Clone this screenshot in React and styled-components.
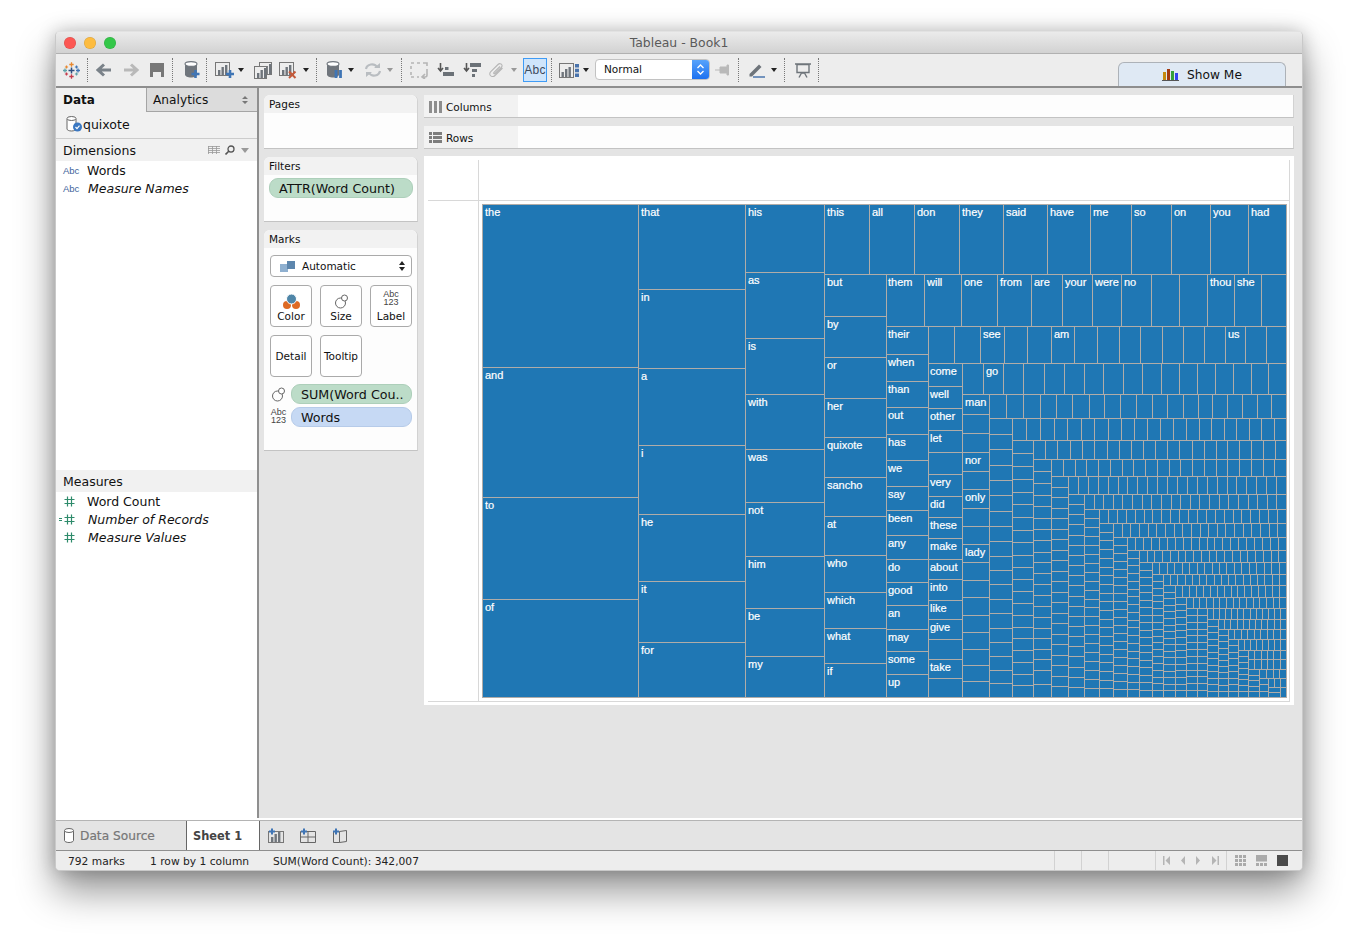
import React from 'react';
import styled, { createGlobalStyle } from 'styled-components';

const FONT = '"DejaVu Sans", sans-serif';

const GlobalStyle = createGlobalStyle`
  html, body {
    margin: 0;
    background: #fff;
    font-family: ${FONT};
    color: #111;
  }
`;

const Page = styled.div`
  width: 1358px;
  height: 951px;
  padding: 31px 0 0 55px;
  box-sizing: border-box;
  overflow: hidden;
`;

const Window = styled.div`
  width: 1248px;
  height: 840px;
  box-sizing: border-box;
  border: 1px solid #c9c9c9;
  border-top-color: #e2e2e2;
  border-radius: 5px;
  overflow: hidden;
  display: flex;
  flex-direction: column;
  box-shadow: 0 20px 38px rgba(0, 0, 0, 0.42), 0 0 18px rgba(0, 0, 0, 0.22);
  background: #ededed;
`;

const TitleBar = styled.div`
  height: 22px;
  box-sizing: border-box;
  flex: none;
  background: linear-gradient(#ebebeb, #d2d2d2);
  border-bottom: 1px solid #b1b1b1;
  display: flex;
  align-items: center;
  justify-content: center;
  position: relative;
  font-size: 12.4px;
  color: #5a5a5a;
`;

const Light = styled.span`
  position: absolute;
  top: 5px;
  left: ${(p) => p.$left}px;
  width: 12px;
  height: 12px;
  border-radius: 50%;
  background: ${(p) => p.$color};
  box-shadow: inset 0 0 0 0.5px rgba(0, 0, 0, 0.15);
`;

const Toolbar = styled.div`
  height: 34px;
  box-sizing: border-box;
  flex: none;
  background: #ededed;
  border-bottom: 2px solid #8e8e8e;
  display: flex;
  align-items: center;
  padding-right: 16px;
`;

const Ico = styled.svg`
  display: block;
  flex: none;
  margin-left: ${(p) => p.$gap || 0}px;
`;

const Sep = styled.span`
  flex: none;
  width: 0;
  height: 24px;
  margin-left: ${(p) => p.$gap}px;
  margin-right: 1px;
  border-left: 1px dotted #777;
`;

const Caret = styled.span`
  flex: none;
  width: 0;
  height: 0;
  margin-left: ${(p) => p.$gap}px;
  border-left: ${(p) => (p.$wide ? 4 : 3)}px solid transparent;
  border-right: ${(p) => (p.$wide ? 4 : 3)}px solid transparent;
  border-top: ${(p) => (p.$wide ? 5 : 4)}px solid ${(p) => (p.$light ? '#999' : '#222')};
`;

const AbcToggle = styled.div`
  flex: none;
  width: 24px;
  height: 24px;
  box-sizing: border-box;
  margin-left: ${(p) => p.$gap}px;
  background: #cfe5fb;
  border: 1px solid #3f9bf5;
  font: 12px 'Liberation Sans', sans-serif;
  color: #3d4a5c;
  display: flex;
  align-items: center;
  justify-content: center;
  letter-spacing: 0.2px;
`;

const SelectBox = styled.div`
  flex: none;
  width: 115px;
  height: 21px;
  box-sizing: border-box;
  margin: -1px 0 0 ${(p) => p.$gap}px;
  background: #fff;
  border: 1px solid #c2c2c2;
  border-radius: 4px;
  font-size: 10.5px;
  display: flex;
  align-items: center;
  justify-content: space-between;
  padding: 0 0 1px 8px;
  overflow: hidden;
`;

const Stepper = styled.span`
  width: 17px;
  height: 21px;
  margin-bottom: -1px;
  background: linear-gradient(#5aa5fb, #1a6ff0);
  display: flex;
  align-items: center;
  justify-content: center;
`;

const ShowMe = styled.div`
  margin-left: auto;
  align-self: flex-end;
  width: 168px;
  height: 24px;
  box-sizing: border-box;
  background: #dfe9f4;
  border: 1px solid #adb2b8;
  border-bottom: none;
  border-radius: 6px 6px 0 0;
  display: flex;
  align-items: center;
  justify-content: center;
  gap: 8px;
  font-size: 12.2px;
`;

const Main = styled.div`
  height: 732px;
  flex: none;
  display: flex;
  background: #e4e4e4;
  border-bottom: 2px solid #fff;
  box-sizing: border-box;
`;

const DataPane = styled.div`
  width: 203px;
  box-sizing: border-box;
  flex: none;
  background: #fff;
  border-right: 2px solid #8f8f8f;
  display: flex;
  flex-direction: column;
`;

const PaneTabs = styled.div`
  display: flex;
  height: 24px;
  flex: none;
`;

const PaneTab = styled.div`
  display: flex;
  align-items: center;
  padding-left: ${(p) => (p.$active ? 7 : 6)}px;
  padding-bottom: ${(p) => (p.$active ? 1 : 0)}px;
  box-sizing: border-box;
  position: relative;
  width: ${(p) => (p.$active ? 90 : 111)}px;
  font-weight: ${(p) => (p.$active ? 700 : 400)};
  font-size: ${(p) => (p.$active ? 12 : 12.2)}px;
  background: ${(p) => (p.$active ? '#f1f1f1' : '#dcdcdc')};
  border-left: ${(p) => (p.$active ? 'none' : '1px solid #a5a5a5')};
  border-bottom: ${(p) => (p.$active ? 'none' : '1px solid #a5a5a5')};
`;

const SortArrows = styled.svg`
  position: absolute;
  right: 9px;
  top: 8px;
`;

const SourceRow = styled.div`
  height: 27px;
  flex: none;
  box-sizing: border-box;
  padding: 0 0 2px 10px;
  display: flex;
  align-items: center;
  background: #f1f1f1;
  border-bottom: 1px solid #ccc;
  font-size: 12.5px;
`;

const SectionHead = styled.div`
  height: 22px;
  flex: none;
  box-sizing: border-box;
  padding: 0 8px 0 7px;
  display: flex;
  align-items: center;
  background: #f1f1f1;
  font-size: 12.5px;
  gap: 5px;
`;

const HeadTitle = styled.span`
  flex: 1;
`;

const FieldList = styled.div`
  height: ${(p) => p.$h}px;
  flex: none;
`;

const FieldRow = styled.div`
  height: 18px;
  display: flex;
  align-items: center;
  font-size: 12.5px;
  font-style: ${(p) => (p.$calc ? 'italic' : 'normal')};
  position: relative;
  padding-left: ${(p) => (p.$calc ? 32 : 31)}px;
`;

const FieldIcon = styled.span`
  position: absolute;
  left: 7px;
  top: 0;
  height: 18px;
  display: flex;
  align-items: center;
  font: normal 9.5px 'Liberation Sans', sans-serif;
  color: #41639b;
`;

const HashSvg = styled.svg`
  position: absolute;
  left: ${(p) => p.$left}px;
  top: 4px;
`;

const Workspace = styled.div`
  flex: 1;
  min-width: 0;
  display: flex;
  align-items: flex-start;
  gap: 6px;
  padding: 7px 0 0 5px;
`;

const CardsCol = styled.div`
  width: 154px;
  flex: none;
  display: flex;
  flex-direction: column;
  gap: 8px;
`;

const Card = styled.div`
  height: ${(p) => p.$h}px;
  box-sizing: border-box;
  background: #fdfdfd;
  border-radius: 6px 6px 0 0;
  border-bottom: 1px solid #c3c3c3;
  border-right: 1px solid #d2d2d2;
  display: flex;
  flex-direction: column;
`;

const CardHead = styled.div`
  height: 18px;
  flex: none;
  padding-left: 5px;
  display: flex;
  align-items: center;
  font-size: 10.5px;
  background: #f2f2f2;
  border-radius: 6px 6px 0 0;
`;

const Pill = styled.div`
  height: 20px;
  box-sizing: border-box;
  border-radius: 9px;
  padding-left: 9px;
  display: flex;
  align-items: center;
  font-size: 12.7px;
  white-space: nowrap;
  flex: ${(p) => (p.$grow ? 1 : 'none')};
  background: ${(p) => (p.$blue ? '#c6d9f4' : '#bcdcc8')};
  border: 1px solid ${(p) => (p.$blue ? '#b6cbe9' : '#adcfba')};
`;

const FilterBody = styled.div`
  padding: 3px 4px 0 5px;
`;

const MarksBody = styled.div`
  padding: 7px 5px 0 6px;
  display: flex;
  flex-direction: column;
`;

const MarkType = styled.div`
  height: 22px;
  width: 142px;
  box-sizing: border-box;
  border: 1px solid #aaa;
  border-radius: 4px;
  background: #fff;
  display: flex;
  align-items: center;
  padding: 0 6px 0 9px;
  font-size: 10.5px;
  gap: 7px;
`;

const MarkGrid = styled.div`
  display: grid;
  grid-template-columns: repeat(3, 42px);
  gap: 8px;
  margin-top: 8px;
`;

const MarkButton = styled.div`
  height: 42px;
  box-sizing: border-box;
  border: 1px solid #aaa;
  border-radius: 4px;
  background: #fff;
  display: flex;
  flex-direction: column;
  align-items: center;
  justify-content: flex-end;
  padding-bottom: ${(p) => (p.$plain ? 14 : 4)}px;
  font-size: 10.5px;
  gap: 1px;
  white-space: nowrap;
`;

const StackedAbc = styled.span`
  font: 9px/8px 'Liberation Sans', sans-serif;
  text-align: center;
  color: #444;
  margin-bottom: 3px;
`;

const Encodings = styled.div`
  margin-top: 7px;
  width: 142px;
  display: flex;
  flex-direction: column;
  gap: 3px;
`;

const EncodingRow = styled.div`
  display: flex;
  align-items: center;
  gap: 4px;
`;

const EncodingIcon = styled.div`
  width: 17px;
  flex: none;
  display: flex;
  justify-content: center;
`;

const ViewCol = styled.div`
  width: 870px;
  flex: none;
  display: flex;
  flex-direction: column;
`;

const Shelf = styled.div`
  height: 23px;
  box-sizing: border-box;
  margin-bottom: 8px;
  background: #fdfdfd;
  border-bottom: 1px solid #c3c3c3;
  border-right: 1px solid #d2d2d2;
  display: flex;
`;

const ShelfHead = styled.div`
  width: 94px;
  flex: none;
  background: #f2f2f2;
  display: flex;
  align-items: center;
  gap: 4px;
  padding: 1px 0 0 5px;
  box-sizing: border-box;
  font-size: 10.5px;
`;

const View = styled.div`
  height: 549px;
  margin-top: -1px;
  box-sizing: border-box;
  background: #fff;
  padding: 4px 4px 3px 4px;
`;

const ViewGrid = styled.div`
  height: 100%;
  box-sizing: border-box;
  display: grid;
  grid-template-columns: 50px 1fr;
  grid-template-rows: 41px 1fr;
  border-right: 1px solid #d8d8d8;
  border-bottom: 1px solid #d8d8d8;
`;

const Pane = styled.div`
  min-width: 0;
  min-height: 0;
  border-bottom: ${(p) => (p.$under ? '1px solid #d8d8d8' : 'none')};
  border-left: ${(p) => (p.$side ? '1px solid #d8d8d8' : 'none')};
  padding: ${(p) => (p.$chart ? '3px 0 0 3px' : 0)};
`;

const ChartSvg = styled.svg`
  display: block;
`;

const Cell = styled.rect`
  fill: #1f77b4;
  stroke: #b0aca8;
  stroke-width: 1;
`;

const CellLabel = styled.text`
  fill: #fff;
  stroke: #fff;
  stroke-width: 0.2;
  font-family: 'Liberation Sans', sans-serif;
  font-size: 11px;
`;

const TabBar = styled.div`
  height: 31px;
  box-sizing: border-box;
  flex: none;
  background: #e4e4e4;
  border-top: 1px solid #b4b4b4;
  border-bottom: 1px solid #8f8f8f;
  display: flex;
  align-items: stretch;
`;

const DataSourceTab = styled.div`
  width: 130px;
  flex: none;
  box-sizing: border-box;
  padding-left: 8px;
  display: flex;
  align-items: center;
  gap: 6px;
  font-size: 12.2px;
  color: #777;
  -webkit-text-stroke: 0.2px #777;
`;

const SheetTab = styled.div`
  width: 74px;
  flex: none;
  box-sizing: border-box;
  padding-left: 6px;
  display: flex;
  align-items: center;
  font-size: 11.4px;
  font-weight: 700;
  color: #444;
  background: #fff;
  border-left: 1px solid #666;
  border-right: 1px solid #666;
`;

const TabTools = styled.div`
  display: flex;
  align-items: center;
  padding-left: 8px;
  gap: 15px;
`;

const StatusBar = styled.div`
  height: 19px;
  flex: none;
  background: #ededed;
  display: flex;
  align-items: stretch;
  font-size: 10.7px;
  color: #222;
`;

const StatusText = styled.div`
  width: ${(p) => p.$w}px;
  padding: 1px 0 0 ${(p) => p.$pad || 0}px;
  box-sizing: border-box;
  flex: none;
  display: flex;
  align-items: center;
  white-space: nowrap;
`;

const StatusSpacer = styled.div`
  flex: 1;
`;

const StatusCell = styled.div`
  width: ${(p) => p.$w}px;
  flex: none;
  box-sizing: border-box;
  border-left: 1px solid #d2d2d2;
  display: flex;
  align-items: center;
  gap: ${(p) => p.$gap || 0}px;
  padding-left: ${(p) => p.$pad || 0}px;
`;

/* treemap data, absolute page coordinates */
const CHART_X = 482;
const CHART_Y = 204;
const CHART_R = 1286;
const CHART_B = 697;

const cells = [];
const push = (x0, y0, x1, y1, label) => cells.push({ x0, y0, x1, y1, label });

// a column of stacked cells: stops are [top, label]
const col = (x0, x1, stops, end = CHART_B) =>
  stops.forEach(([y, label], i) => push(x0, y, x1, i + 1 < stops.length ? stops[i + 1][0] : end, label));

// a row of side by side cells: stops are [left, label]
const row = (y0, y1, stops, end = CHART_R) =>
  stops.forEach(([x, label], i) => push(x, y0, i + 1 < stops.length ? stops[i + 1][0] : end, y1, label));

const split = (a, b, n) => Array.from({ length: n }, (_, i) => [Math.round(a + ((b - a) * i) / n)]);
const tops = (list) => list.map((v) => [v]);

col(482, 638, [[204, 'the'], [367, 'and'], [497, 'to'], [599, 'of']]);
col(638, 745, [[204, 'that'], [289, 'in'], [368, 'a'], [445, 'i'], [514, 'he'], [581, 'it'], [642, 'for']]);
col(745, 824, [[204, 'his'], [272, 'as'], [338, 'is'], [394, 'with'], [449, 'was'], [502, 'not'], [556, 'him'], [608, 'be'], [656, 'my']]);
row(204, 274, [[824, 'this'], [869, 'all'], [914, 'don'], [959, 'they'], [1003, 'said'], [1047, 'have'], [1090, 'me'], [1131, 'so'], [1171, 'on'], [1210, 'you'], [1248, 'had']]);
col(824, 886, [[274, 'but'], [316, 'by'], [357, 'or'], [398, 'her'], [437, 'quixote'], [477, 'sancho'], [516, 'at'], [555, 'who'], [592, 'which'], [628, 'what'], [663, 'if']]);
row(274, 326, [[886, 'them'], [924, 'will'], [961, 'one'], [997, 'from'], [1031, 'are'], [1062, 'your'], [1092, 'were'], [1121, 'no'], [1151], [1179], [1207, 'thou'], [1234, 'she'], [1261]]);
col(886, 928, [[326, 'their'], [354, 'when'], [381, 'than'], [407, 'out'], [434, 'has'], [460, 'we'], [486, 'say'], [510, 'been'], [535, 'any'], [559, 'do'], [582, 'good'], [605, 'an'], [629, 'may'], [651, 'some'], [674, 'up']]);
row(326, 363, [[928], [954], [980, 'see'], [1004], [1027], [1051, 'am'], [1074], [1097], [1119], [1140], [1162], [1183], [1204], [1225, 'us'], [1245], [1266]]);
col(928, 962, [[363, 'come'], [386, 'well'], [408, 'other'], [430, 'let'], [452], [474, 'very'], [496, 'did'], [517, 'these'], [538, 'make'], [559, 'about'], [579, 'into'], [600, 'like'], [619, 'give'], [639], [659, 'take'], [678]]);
row(363, 394, [[962], [983, 'go'], [1003], [1023], [1044], [1064], [1084], [1103], [1123], [1142], [1161], [1179], [1197], [1215], [1233], [1251], [1268]]);
col(962, 989, [[394, 'man'], [414], [433], [452, 'nor'], [471], [489, 'only'], [508], [526], [544, 'lady'], [562], [580], [597], [615], [632], [649], [665], [681]]);
row(394, 418, tops([989, 1006, 1023, 1040, 1056, 1072, 1089, 1104, 1120, 1136, 1152, 1167, 1183, 1198, 1212, 1227, 1242, 1257, 1271]));
col(989, 1012, tops([418, 434, 449, 465, 480, 495, 511, 526, 541, 556, 570, 584, 599, 613, 628, 642, 656, 670, 683]));
row(418, 440, tops([1012, 1026, 1040, 1054, 1067, 1081, 1094, 1108, 1121, 1134, 1147, 1160, 1173, 1186, 1199, 1211, 1224, 1236, 1249, 1261, 1274]));
col(1012, 1033, tops([440, 453, 466, 479, 492, 504, 517, 530, 542, 555, 567, 579, 591, 603, 615, 627, 638, 650, 662, 674, 685]));
row(440, 459, tops([1033, 1045, 1057, 1070, 1082, 1094, 1107, 1119, 1131, 1143, 1155, 1167, 1179, 1192, 1204, 1216, 1227, 1239, 1251, 1263, 1275]));
col(1033, 1051, tops([459, 471, 483, 495, 506, 518, 529, 540, 552, 562, 573, 584, 595, 606, 617, 628, 638, 649, 659, 670, 684]));

// the staircase toward the lower right: a row, then a column, each smaller
row(459, 476, split(1051, 1286, 20));
col(1051, 1068, split(476, 697, 21));
row(476, 494, split(1068, 1286, 22));
col(1068, 1084, split(494, 697, 20));
row(494, 509, split(1084, 1286, 21));
col(1084, 1099, split(509, 697, 21));
row(509, 523, split(1099, 1286, 21));
col(1099, 1113, split(523, 697, 20));
row(523, 537, split(1113, 1286, 20));
col(1113, 1127, split(537, 697, 20));
row(537, 550, split(1127, 1286, 20));
col(1127, 1139, split(550, 697, 19));
row(550, 562, split(1139, 1286, 19));
col(1139, 1152, split(562, 697, 18));
row(562, 574, split(1152, 1286, 18));
col(1152, 1163, split(574, 697, 18));
row(574, 585, split(1163, 1286, 17));
col(1163, 1175, split(585, 697, 17));
row(585, 597, split(1175, 1286, 16));
col(1175, 1186, split(597, 697, 15));
row(597, 608, split(1186, 1286, 15));
col(1186, 1197, split(608, 697, 13));
col(1197, 1207, split(608, 697, 13));
row(608, 619, split(1207, 1286, 13));
col(1207, 1218, split(619, 697, 12));
row(619, 629, split(1218, 1286, 11));
col(1218, 1228, split(629, 697, 11));
row(629, 639, split(1228, 1286, 9));
col(1228, 1238, split(639, 697, 9));
row(639, 650, split(1238, 1286, 8));
col(1238, 1248, split(650, 697, 8));
row(650, 659, split(1248, 1286, 6));
row(659, 669, split(1248, 1286, 6));
col(1248, 1259, split(669, 697, 5));
row(669, 678, split(1259, 1286, 4));
col(1259, 1268, split(678, 697, 3));
row(678, 687, split(1268, 1286, 3));
col(1268, 1280, [[687], [692]]);
push(1280, 687, 1286, 697);

// the two narrow columns sit their labels a pixel closer to the edge
const labelX = (c) => c.x0 + (c.x0 === 886 || c.x0 === 928 ? 2 : 3);

const Treemap = () => (
  <ChartSvg width={806} height={495} viewBox={`${CHART_X} ${CHART_Y} 806 495`}>
    {cells.map((c, i) => (
      <Cell key={i} x={c.x0 + 0.5} y={c.y0 + 0.5} width={c.x1 - c.x0} height={c.y1 - c.y0} />
    ))}
    {cells
      .filter((c) => c.label)
      .map((c) => (
        <CellLabel key={c.label} x={labelX(c)} y={c.y0 + 12}>
          {c.label}
        </CellLabel>
      ))}
  </ChartSvg>
);

const plus = (x, y, r, color, w = 1) => (
  <path key={`${x}-${y}`} d={`M${x - r} ${y}H${x + r}M${x} ${y - r}V${y + r}`} stroke={color} strokeWidth={w} fill="none" />
);

const Db = ({ color = '#6f757c' }) => (
  <>
    <path d="M1 3.500v10c0 1.700 2.800 3 6 3s6-1.300 6-3v-10z" fill={color} />
    <ellipse cx="7" cy="3" rx="6" ry="2.400" fill="#fff" stroke={color} strokeWidth="1.100" />
  </>
);

const MiniBars = ({ x = 0, y = 0, color = '#6f757c' }) => (
  <g transform={`translate(${x} ${y})`} fill={color}>
    <rect x="3" y="8" width="2.400" height="5" />
    <rect x="6.500" y="5" width="2.400" height="8" />
    <rect x="10" y="3" width="2.400" height="10" />
  </g>
);

const BluePlus = ({ x, y, r = 4 }) => plus(x, y, r, '#3f75b5', 2.6);

const Hash = ({ left = 8, equals }) => (
  <HashSvg $left={left} width={equals ? 16 : 12} height="11" viewBox={equals ? '-5 0 16 11' : '0 0 12 11'}>
    <path d="M3.500 0.500v10M7.500 0.500v10M0.500 3.500h10M0.500 7.500h10" stroke="#2e8b6b" strokeWidth="1.200" fill="none" />
    {equals && <path d="M-5 4.500h3M-5 6.500h3" stroke="#2e8b6b" strokeWidth="1" fill="none" />}
  </HashSvg>
);

const SizeIcon = () => (
  <svg width="15" height="15" viewBox="0 0 15 15">
    <circle cx="6.500" cy="9" r="5" fill="none" stroke="#666" />
    <circle cx="10.500" cy="4" r="3" fill="#fff" stroke="#666" />
  </svg>
);

const AbcGlyph = () => (
  <StackedAbc>
    Abc
    <br />
    123
  </StackedAbc>
);

const ToolIcons = () => (
  <>
    <Ico $gap={7} width="17" height="17" viewBox="0 0 17 17">
      {plus(8.5, 2.5, 2.2, '#e8882f', 1.3)}
      {plus(3.5, 5, 1.6, '#e8882f', 1.2)}
      {plus(13.5, 5, 1.6, '#3f75b5', 1.2)}
      {plus(2, 8.5, 2, '#5fa2a8', 1.3)}
      {plus(8.5, 8.5, 3, '#2f4f7f', 1.5)}
      {plus(15, 8.5, 2, '#3f75b5', 1.3)}
      {plus(3.5, 12, 1.6, '#c43a4b', 1.2)}
      {plus(13.5, 12, 1.6, '#5fa2a8', 1.2)}
      {plus(8.5, 14.5, 2.2, '#c43a4b', 1.3)}
    </Ico>
    <Sep $gap={7} />
    <Ico $gap={7} width="16" height="14" viewBox="0 0 16 14">
      <path d="M15 7H3M8 1.500 2 7l6 5.500" fill="none" stroke="#7a8289" strokeWidth="3" />
    </Ico>
    <Ico $gap={11} width="16" height="14" viewBox="0 0 16 14">
      <path d="M1 7h12M8 1.500 14 7l-6 5.500" fill="none" stroke="#b9b9b9" strokeWidth="3" />
    </Ico>
    <Ico $gap={11} width="14" height="14" viewBox="0 0 14 14">
      <path d="M0 0h14v14H0zM3 9v5h8V9z" fill="#777" fillRule="evenodd" />
    </Ico>
    <Sep $gap={8} />
    <Ico $gap={10} width="16" height="18" viewBox="0 0 16 18">
      <Db />
      <BluePlus x={11.5} y={13} />
    </Ico>
    <Sep $gap={6} />
    <Ico $gap={7} width="20" height="17" viewBox="0 0 20 17">
      <rect x="0.500" y="0.500" width="14" height="13" fill="none" stroke="#777" />
      <MiniBars x={0} y={0} />
      <BluePlus x={15} y={12} />
    </Ico>
    <Caret $gap={3} />
    <Ico $gap={10} width="18" height="17" viewBox="0 0 18 17">
      <rect x="5.500" y="0.500" width="12" height="12" fill="#ededed" stroke="#777" />
      <MiniBars x={5} y={-1} />
      <rect x="0.500" y="4.500" width="12" height="12" fill="#ededed" stroke="#777" />
      <MiniBars x={0} y={3} />
    </Ico>
    <Ico $gap={7} width="18" height="17" viewBox="0 0 18 17">
      <rect x="0.500" y="0.500" width="14" height="13" fill="none" stroke="#777" />
      <MiniBars x={0} y={0} />
      <path d="M10 9.500l6.500 6.500M16.500 9.500 10 16" stroke="#c4593a" strokeWidth="2" />
    </Ico>
    <Caret $gap={6} />
    <Sep $gap={7} />
    <Ico $gap={8} width="18" height="18" viewBox="0 0 18 18">
      <Db />
      <path d="M10 9v8M14.500 9v8" stroke="#3f75b5" strokeWidth="2.800" />
    </Ico>
    <Caret $gap={4} />
    <Ico $gap={10} width="18" height="16" viewBox="0 0 18 16">
      <path d="M2 7a6 5.500 0 0 1 11-2M16 9a6 5.500 0 0 1-11 2" fill="none" stroke="#b9bdc1" strokeWidth="2.200" />
      <path d="M10 6h6V1zM8 10H2v5z" fill="#b9bdc1" />
    </Ico>
    <Caret $gap={5} $light />
    <Sep $gap={8} />
    <Ico $gap={7} width="19" height="17" viewBox="0 0 19 17">
      <path d="M1 1h3M7 1h3M13 1h4v3M1 4v3M1 10v3M1 15h3M7 15h2" stroke="#b5b5b5" strokeWidth="1.600" fill="none" />
      <path d="M17 7v6a2 2 0 0 1-2 2h-3M15 12l-3 3 3 2" stroke="#b5b5b5" strokeWidth="1.600" fill="none" />
    </Ico>
    <Ico $gap={8} width="17" height="16" viewBox="0 0 17 16">
      <path d="M3.500 1v7M1 6l2.500 3L6 6" stroke="#555" strokeWidth="1.600" fill="none" />
      <rect x="8" y="5" width="3.500" height="3" fill="#6b7177" />
      <rect x="6" y="10" width="11" height="4" fill="#6b7177" />
    </Ico>
    <Ico $gap={9} width="18" height="16" viewBox="0 0 18 16">
      <path d="M3.500 1v7M1 6l2.500 3L6 6" stroke="#555" strokeWidth="1.600" fill="none" />
      <rect x="7" y="1" width="11" height="4" fill="#6b7177" />
      <rect x="9" y="7" width="5" height="3" fill="#6b7177" />
      <rect x="9" y="12" width="3" height="3" fill="#6b7177" />
    </Ico>
    <Ico $gap={7} width="16" height="16" viewBox="0 0 16 16">
      <path d="M14.500 6 7 13.500c-1.800 1.800-4.800 1-5.200-1-.2-1 .2-2 1-2.800L10 2.500c1.200-1.200 3-1 3.700 0 .7.900.5 2-.3 2.800L7 11.500c-.7.700-1.800 0-1.200-.9L12 4.500" fill="none" stroke="#b5b5b5" strokeWidth="1.100" />
    </Ico>
    <Caret $gap={7} $light />
    <AbcToggle $gap={6}>Abc</AbcToggle>
    <Sep $gap={4} />
    <Ico $gap={6} width="20" height="15" viewBox="0 0 20 15">
      <rect x="0.500" y="0.500" width="14" height="14" fill="none" stroke="#777" />
      <MiniBars x={-0.5} y={1} />
      <path d="M16 1h4v3.500h-4zM16 5.800h4v3.400h-4zM16 10.500h4V14h-4z" fill="#4a74ad" />
    </Ico>
    <Caret $gap={4} />
    <SelectBox $gap={6}>
      Normal
      <Stepper>
        <svg width="9" height="13" viewBox="0 0 9 13">
          <path d="M1.500 5 4.500 2l3 3M1.500 8l3 3 3-3" fill="none" stroke="#fff" strokeWidth="1.300" />
        </svg>
      </Stepper>
    </SelectBox>
    <Ico $gap={5} width="16" height="12" viewBox="0 0 16 12">
      <path d="M0 6h5M5 3h7V1h1.500v10H12V9H5z" stroke="#b9b9b9" strokeWidth="1" fill="#b9b9b9" />
    </Ico>
    <Sep $gap={7} />
    <Ico $gap={8} width="17" height="15" viewBox="0 0 17 15">
      <path d="M1.500 11 11 1.500 13.500 4 4 13.500H1.500z" fill="#6e747a" />
      <path d="M5 14h12" stroke="#4a74ad" strokeWidth="1.600" />
    </Ico>
    <Caret $gap={6} />
    <Sep $gap={7} />
    <Ico $gap={9} width="16" height="15" viewBox="0 0 16 15">
      <path d="M0 1h16M2 1.500h12v8H2zM8 9.500V11M4 14.500 6.500 10M12 14.500 9.500 10" fill="none" stroke="#6e747a" strokeWidth="1.400" />
    </Ico>
    <Sep $gap={7} />
  </>
);

const App = () => (
  <>
    <GlobalStyle />
    <Page>
      <Window>
        <TitleBar>
          <Light $left={8} $color="#fc5753" />
          <Light $left={28} $color="#fdbc40" />
          <Light $left={48} $color="#34c749" />
          Tableau - Book1
        </TitleBar>
        <Toolbar>
          <ToolIcons />
          <ShowMe>
            <svg width="17" height="13" viewBox="0 0 17 13">
              <rect x="1" y="4" width="3" height="8" fill="#c48a10" />
              <rect x="5" y="1" width="3" height="11" fill="#a23a10" />
              <rect x="9" y="3" width="3" height="9" fill="#36a03a" />
              <rect x="13" y="5" width="3" height="7" fill="#3344ee" />
              <path d="M0 12.500h17" stroke="#555" />
            </svg>
            Show Me
          </ShowMe>
        </Toolbar>
        <Main>
          <DataPane>
            <PaneTabs>
              <PaneTab $active>Data</PaneTab>
              <PaneTab>
                Analytics
                <SortArrows width="6" height="8" viewBox="0 0 6 8">
                  <path d="M3 0 6 3H0zM3 8 0 5h6z" fill="#777" />
                </SortArrows>
              </PaneTab>
            </PaneTabs>
            <SourceRow>
              <svg width="17" height="16" viewBox="0 0 17 16">
                <path d="M1 3v10c0 1 2 2 4.500 2S10 14 10 13V3" fill="#fff" stroke="#666" />
                <ellipse cx="5.500" cy="2.500" rx="4.500" ry="2" fill="#fff" stroke="#666" />
                <circle cx="11.500" cy="11" r="4.500" fill="#3b78c2" />
                <path d="M9.500 11l1.500 1.600 2.500-3" fill="none" stroke="#fff" strokeWidth="1.200" />
              </svg>
              quixote
            </SourceRow>
            <SectionHead>
              <HeadTitle>Dimensions</HeadTitle>
              <svg width="12" height="8" viewBox="0 0 12 8">
                <path d="M0 .5h12M0 2.500h12M0 4.500h12M0 6.500h12M.5 0v8M4.500 0v8M8.500 0v8" stroke="#999" strokeWidth=".8" fill="none" />
              </svg>
              <svg width="10" height="10" viewBox="0 0 10 10">
                <circle cx="6" cy="4" r="3" fill="none" stroke="#555" strokeWidth="1.300" />
                <path d="M4 6 .5 9.500" stroke="#555" strokeWidth="1.600" />
              </svg>
              <Caret $gap={1} $light $wide />
            </SectionHead>
            <FieldList $h={309}>
              <FieldRow>
                <FieldIcon>Abc</FieldIcon>Words
              </FieldRow>
              <FieldRow $calc>
                <FieldIcon>Abc</FieldIcon>Measure Names
              </FieldRow>
            </FieldList>
            <SectionHead>Measures</SectionHead>
            <FieldList $h={60}>
              <FieldRow>
                <Hash />
                Word Count
              </FieldRow>
              <FieldRow $calc>
                <Hash left={3} equals />
                Number of Records
              </FieldRow>
              <FieldRow $calc>
                <Hash />
                Measure Values
              </FieldRow>
            </FieldList>
          </DataPane>
          <Workspace>
            <CardsCol>
              <Card $h={54}>
                <CardHead>Pages</CardHead>
              </Card>
              <Card $h={65}>
                <CardHead>Filters</CardHead>
                <FilterBody>
                  <Pill>ATTR(Word Count)</Pill>
                </FilterBody>
              </Card>
              <Card $h={221}>
                <CardHead>Marks</CardHead>
                <MarksBody>
                  <MarkType>
                    <svg width="15" height="11" viewBox="0 0 15 11">
                      <rect x="0" y="3" width="8" height="8" fill="#8fb0d0" />
                      <rect x="7" y="0" width="8" height="8" fill="#5d86ad" />
                    </svg>
                    <HeadTitle>Automatic</HeadTitle>
                    <svg width="6" height="10" viewBox="0 0 6 10">
                      <path d="M3 0 6 4H0zM3 10 0 6h6z" fill="#222" />
                    </svg>
                  </MarkType>
                  <MarkGrid>
                    <MarkButton>
                      <svg width="17" height="15" viewBox="0 0 17 15">
                        <circle cx="4" cy="11" r="4" fill="#de6a24" />
                        <circle cx="13" cy="11" r="4" fill="#de6a24" />
                        <circle cx="8.500" cy="5" r="5" fill="#4f86a8" stroke="#fff" />
                      </svg>
                      Color
                    </MarkButton>
                    <MarkButton>
                      <SizeIcon />
                      Size
                    </MarkButton>
                    <MarkButton>
                      <AbcGlyph />
                      Label
                    </MarkButton>
                    <MarkButton $plain>Detail</MarkButton>
                    <MarkButton $plain>Tooltip</MarkButton>
                  </MarkGrid>
                  <Encodings>
                    <EncodingRow>
                      <EncodingIcon>
                        <SizeIcon />
                      </EncodingIcon>
                      <Pill $grow>SUM(Word Cou..</Pill>
                    </EncodingRow>
                    <EncodingRow>
                      <EncodingIcon>
                        <AbcGlyph />
                      </EncodingIcon>
                      <Pill $grow $blue>
                        Words
                      </Pill>
                    </EncodingRow>
                  </Encodings>
                </MarksBody>
              </Card>
            </CardsCol>
            <ViewCol>
              <Shelf>
                <ShelfHead>
                  <svg width="13" height="12" viewBox="0 0 13 12">
                    <path d="M0 0h3v12H0zM5 0h3v12H5zM10 0h3v12h-3z" fill="#8d8d8d" />
                  </svg>
                  Columns
                </ShelfHead>
              </Shelf>
              <Shelf>
                <ShelfHead>
                  <svg width="13" height="11" viewBox="0 0 13 11">
                    <path d="M0 0h3v3H0zM4 0h9v3H4zM0 4h3v3H0zM4 4h9v3H4zM0 8h3v3H0zM4 8h9v3H4z" fill="#7d7d7d" />
                  </svg>
                  Rows
                </ShelfHead>
              </Shelf>
              <View>
                <ViewGrid>
                  <Pane $under />
                  <Pane $under $side />
                  <Pane />
                  <Pane $side $chart>
                    <Treemap />
                  </Pane>
                </ViewGrid>
              </View>
            </ViewCol>
          </Workspace>
        </Main>
        <TabBar>
          <DataSourceTab>
            <svg width="10" height="15" viewBox="0 0 10 15">
              <path d="M.5 2.500v10c0 1 2 2 4.500 2s4.500-1 4.500-2v-10" fill="#fff" stroke="#666" />
              <ellipse cx="5" cy="2.500" rx="4.500" ry="2" fill="#fff" stroke="#666" />
            </svg>
            Data Source
          </DataSourceTab>
          <SheetTab>Sheet 1</SheetTab>
          <TabTools>
            <svg width="17" height="15" viewBox="0 0 17 15">
              <rect x="0.500" y="3.500" width="15" height="11" fill="none" stroke="#777" />
              <MiniBars x={0} y={1} />
              {plus(4, 3.5, 3, '#3f75b5', 2)}
            </svg>
            <svg width="17" height="15" viewBox="0 0 17 15">
              <path d="M.5 3.500h15v11H.5zM.5 9h15M8 3.500v11" fill="none" stroke="#666" />
              {plus(4, 3.5, 3, '#3f75b5', 2)}
            </svg>
            <svg width="17" height="15" viewBox="0 0 17 15">
              <path d="M1.500 3.500h6v11h-6zM7.500 3.500l7-1v11l-7 1" fill="none" stroke="#666" />
              {plus(4, 3.5, 3, '#3f75b5', 2)}
            </svg>
          </TabTools>
        </TabBar>
        <StatusBar>
          <StatusText $w={94} $pad={12}>792 marks</StatusText>
          <StatusText $w={123}>1 row by 1 column</StatusText>
          <StatusText $w={200}>SUM(Word Count): 342,007</StatusText>
          <StatusSpacer />
          <StatusCell $w={27} />
          <StatusCell $w={27} />
          <StatusCell $w={47} />
          <StatusCell $w={71} $pad={7} $gap={10}>
            <svg width="56" height="9" viewBox="0 0 56 9">
              <path d="M0 0h1.500v9H0zM7 0v9L2.500 4.500zM22 0v9l-4-4.500zM33 0v9l4-4.500zM49 0v9l4.500-4.500zM54.500 0H56v9h-1.500z" fill="#b5b5b5" />
            </svg>
          </StatusCell>
          <StatusCell $w={76} $pad={8} $gap={10}>
            <svg width="11" height="11" viewBox="0 0 11 11">
              <path d="M0 0h3v3H0zM4 0h3v3H4zM8 0h3v3H8zM0 4h3v3H0zM4 4h3v3H4zM8 4h3v3H8zM0 8h3v3H0zM4 8h3v3H4zM8 8h3v3H8z" fill="#aaa" />
            </svg>
            <svg width="11" height="11" viewBox="0 0 11 11">
              <path d="M0 0h11v6.500H0zM0 8h3v3H0zM4 8h3v3H4zM8 8h3v3H8z" fill="#aaa" />
            </svg>
            <svg width="11" height="11" viewBox="0 0 11 11">
              <rect width="11" height="11" fill="#4a4a4a" />
            </svg>
          </StatusCell>
        </StatusBar>
      </Window>
    </Page>
  </>
);

export default App;
